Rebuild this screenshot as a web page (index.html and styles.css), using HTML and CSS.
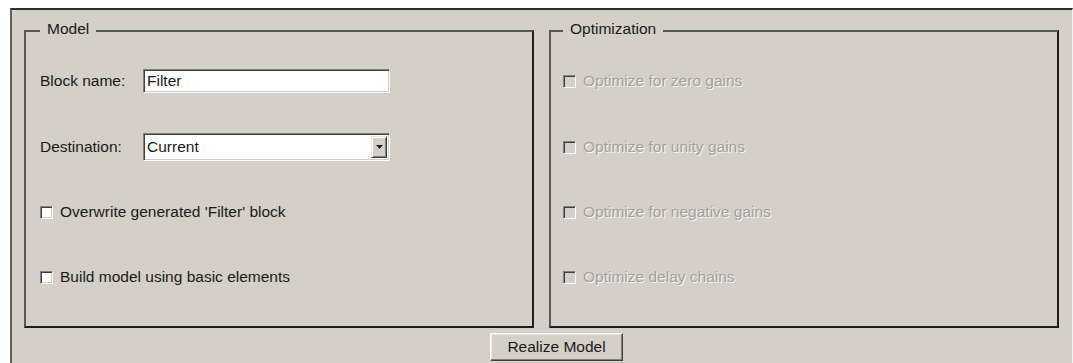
FILE: index.html
```html
<!DOCTYPE html>
<html>
<head>
<meta charset="utf-8">
<link rel="stylesheet" href="styles.css">
</head>
<body>
<div class="window">
  <div class="groups">
    <fieldset class="group group-model">
      <legend>Model</legend>
      <div class="row">
        <span class="label">Block name:</span>
        <div class="textbox">Filter</div>
      </div>
      <div class="row">
        <span class="label">Destination:</span>
        <div class="combo">
          <span class="combo-text">Current</span>
          <span class="combo-btn"><svg width="7" height="4" viewBox="0 0 7 4"><path d="M0 0h7L3.5 4z" fill="#222"/></svg></span>
        </div>
      </div>
      <div class="row">
        <span class="check"></span>
        <span class="check-label">Overwrite generated 'Filter' block</span>
      </div>
      <div class="row">
        <span class="check"></span>
        <span class="check-label">Build model using basic elements</span>
      </div>
    </fieldset>
    <fieldset class="group group-opt">
      <legend>Optimization</legend>
      <div class="row disabled">
        <span class="check"></span>
        <span class="check-label">Optimize for zero gains</span>
      </div>
      <div class="row disabled">
        <span class="check"></span>
        <span class="check-label">Optimize for unity gains</span>
      </div>
      <div class="row disabled">
        <span class="check"></span>
        <span class="check-label">Optimize for negative gains</span>
      </div>
      <div class="row disabled">
        <span class="check"></span>
        <span class="check-label">Optimize delay chains</span>
      </div>
    </fieldset>
  </div>
  <div class="actions">
    <button class="btn" type="button">Realize Model</button>
  </div>
</div>
</body>
</html>
```

FILE: styles.css
```css
html, body {
  margin: 0;
  padding: 0;
  background: #ffffff;
  overflow: hidden;
}

body {
  font-family: "Liberation Sans", Arial, sans-serif;
  font-size: 15.5px;
  color: #1a1a1a;
}

.window {
  margin: 8px 0 0 10px;
  height: 355px;
  box-sizing: border-box;
  background: #d4d0c8;
  border-top: 2px solid #2e2e2e;
  border-left: 2px solid #606060;
  border-right: 1px solid #f2f2f2;
  padding: 10px 13px 0 12px;
}

.groups {
  display: grid;
  grid-template-columns: 510px 510px;
  column-gap: 15px;
}

.group {
  margin: 0;
  height: 308px;
  box-sizing: border-box;
  border-style: solid;
  border-width: 2px;
  border-color: #585858 #1e1e1e #1e1e1e #585858;
  padding: 25px 14px 0 14px;
  display: flex;
  flex-direction: column;
  gap: 37px;
  min-width: 0;
}

.group-opt {
  padding-left: 12px;
}

.group legend {
  padding: 0 7px 4px 7px;
  line-height: 18px;
  color: #1a1a1a;
}

.row {
  height: 28px;
  display: flex;
  align-items: center;
}

.row:first-of-type {
  margin-bottom: 1px;
}

.label {
  width: 103px;
  flex: none;
}

.textbox {
  width: 247px;
  height: 24px;
  box-sizing: border-box;
  background: #fff;
  border: 1px solid;
  border-color: #808080 #ffffff #ffffff #808080;
  box-shadow: inset 1px 1px 0 #404040, inset -1px -1px 0 #d4d0c8;
  padding: 0 0 0 3px;
  display: flex;
  align-items: center;
}

.combo {
  width: 247px;
  height: 28px;
  box-sizing: border-box;
  background: #fff;
  border: 1px solid;
  border-color: #808080 #ffffff #ffffff #808080;
  box-shadow: inset 1px 1px 0 #404040, inset -1px -1px 0 #d4d0c8;
  padding: 2px 2px 2px 3px;
  display: flex;
  align-items: center;
}

.combo-text {
  flex: 1;
}

.combo-btn {
  width: 16px;
  height: 22px;
  box-sizing: border-box;
  background: #d4d0c8;
  border: 1px solid;
  border-color: #e8e6e0 #404040 #404040 #e8e6e0;
  box-shadow: inset 1px 1px 0 #ffffff, inset -1px -1px 0 #808080;
  display: flex;
  align-items: center;
  justify-content: center;
}

.check {
  width: 13px;
  height: 13px;
  box-sizing: border-box;
  flex: none;
  background: #fff;
  border: 1px solid;
  border-color: #808080 #ffffff #ffffff #808080;
  box-shadow: inset 1px 1px 0 #404040, inset -1px -1px 0 #d4d0c8;
  margin-right: 7px;
}

.disabled .check {
  background: #d4d0c8;
}

.disabled .check-label {
  color: #a3a19b;
  text-shadow: 1px 1px 0 #f6f6f2;
}

.actions {
  padding: 5px 0 0 466px;
}

.btn {
  width: 133px;
  height: 28px;
  box-sizing: border-box;
  margin: 0;
  padding: 0;
  font: inherit;
  color: #1a1a1a;
  background: #d4d0c8;
  border: 1px solid;
  border-color: #ffffff #404040 #404040 #ffffff;
  box-shadow: inset -1px -1px 0 #808080, inset 1px 1px 0 #e8e6e0;
  border-radius: 0;
}
```
